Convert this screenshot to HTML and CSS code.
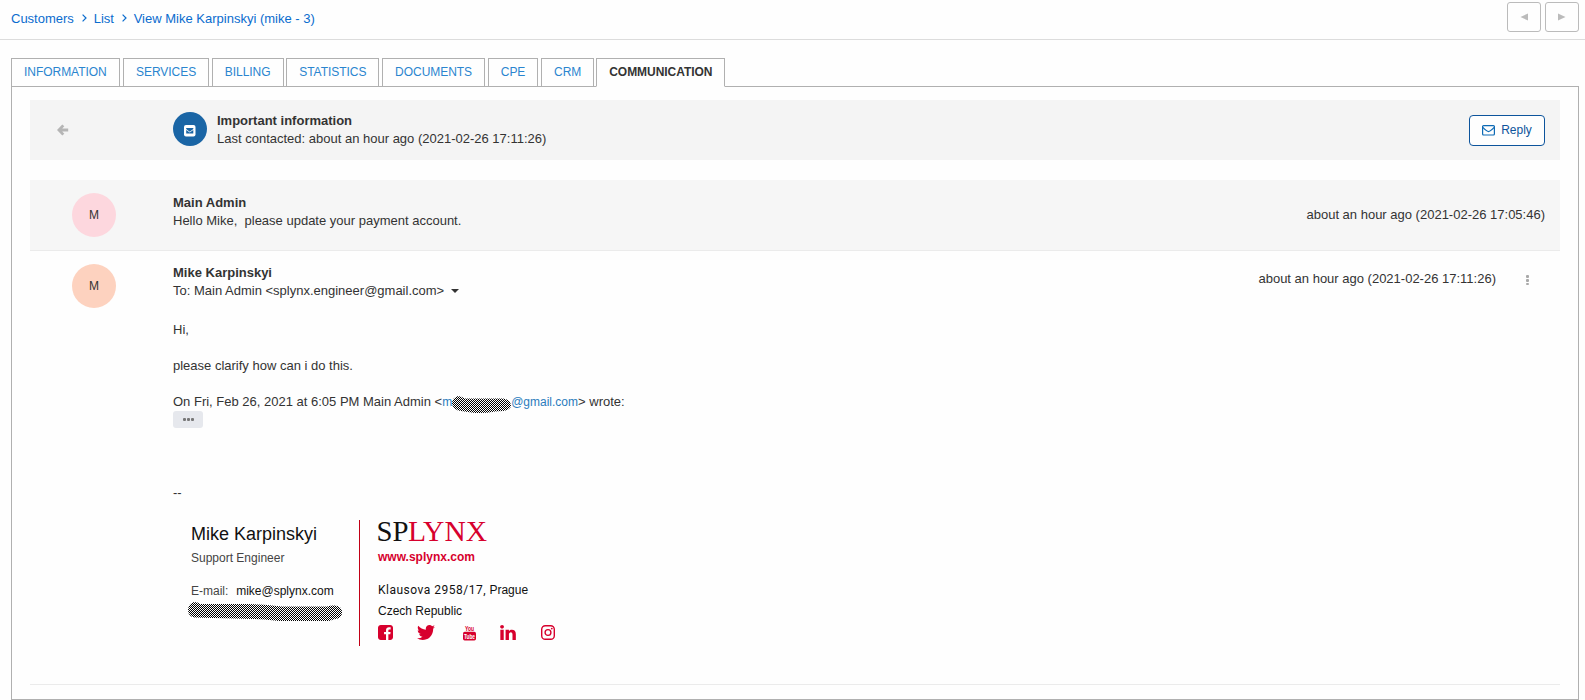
FILE: index.html
```html
<!DOCTYPE html>
<html lang="en">
<head>
<meta charset="utf-8">
<title>View Mike Karpinskyi</title>
<link rel="stylesheet" href="styles.css">
</head>
<body>
<header class="topbar">
  <nav class="crumbs">
    <a>Customers</a>
    <svg class="sep" viewBox="0 0 5 8"><path d="M.6.6 4 4 .6 7.4"/></svg>
    <a>List</a>
    <svg class="sep" viewBox="0 0 5 8"><path d="M.6.6 4 4 .6 7.4"/></svg>
    <a>View Mike Karpinskyi (mike - 3)</a>
  </nav>
  <div class="pager">
    <button class="page-btn"><svg viewBox="0 0 8 8"><path d="M8 .5v7L.5 4z"/></svg></button>
    <button class="page-btn"><svg viewBox="0 0 8 8"><path d="M0 .5v7L7.5 4z"/></svg></button>
  </div>
</header>
<nav class="tabs">
  <a class="tab">INFORMATION</a>
  <a class="tab">SERVICES</a>
  <a class="tab">BILLING</a>
  <a class="tab">STATISTICS</a>
  <a class="tab">DOCUMENTS</a>
  <a class="tab">CPE</a>
  <a class="tab">CRM</a>
  <a class="tab active">COMMUNICATION</a>
</nav>
<main class="panel">
  <section class="subject">
    <div class="back"><svg viewBox="0 0 12 12"><path d="M6.3 1.400 1.900 6l4.400 4.600M2.200 6h9"/></svg></div>
    <div class="badge"><svg viewBox="0 0 12 12"><rect width="11.5" height="11.5" rx="2" fill="#fff"/><path d="M2.2 4.1V3h7.1v1.1L5.75 6.7z M2.2 5.1l3.55 2.5L9.3 5.1v3.5H2.2z" fill="#1a65a5"/></svg></div>
    <div class="lines">
      <b>Important information</b>
      <span>Last contacted: about an hour ago (2021-02-26 17:11:26)</span>
    </div>
    <button class="reply"><svg viewBox="0 0 13 11"><rect x=".6" y=".6" width="11.8" height="9.4" rx="1"/><path d="M.8 2.4Q5 6.6 6.5 6.6T12.2 2.4"/></svg>Reply</button>
  </section>
  <section class="message first">
    <div class="avatar pink">M</div>
    <div class="lines">
      <b>Main Admin</b>
      <span>Hello Mike,&nbsp; please update your payment account.</span>
    </div>
    <time class="when">about an hour ago (2021-02-26 17:05:46)</time>
  </section>
  <section class="message second">
    <div class="avatar peach">M</div>
    <div class="content">
      <div class="lines">
        <b>Mike Karpinskyi</b>
        <span>To: Main Admin &lt;splynx.engineer@gmail.com&gt; <i class="caret"></i></span>
      </div>
      <div class="mail">
        <p>Hi,</p>
        <p>please clarify how can i do this.</p>
        <p>On Fri, Feb 26, 2021 at 6:05 PM Main Admin &lt;<a>m<svg class="hidden-name" viewBox="0 0 60 18"><defs><pattern id="dither" width="2" height="2" patternUnits="userSpaceOnUse"><path d="M0 0h1v1H0zM1 1h1v1H1z" fill="#000"/></pattern></defs><path d="M7 0Q10 0 14 2.500L52 2.500Q60 4 60 9T52 15L44 15.500Q32 18 20 16.500L7 14.500Q1 12 1 7T7 0z" fill="url(#dither)"/></svg>@gmail.com</a>&gt; wrote:</p>
        <button class="more"><i></i><i></i><i></i></button>
      </div>
      <p class="dashes">--</p>
      <div class="signature">
        <div class="person">
          <div class="fullname">Mike Karpinskyi</div>
          <div class="role">Support Engineer</div>
          <div class="email">E-mail: <span>mike@splynx.com</span></div>
          <svg class="hidden-phone" viewBox="0 0 156 20"><path d="M7 0Q11 0 13 2L60 2Q75 2 95 4.500L140 4.500Q144 3 148 3.500Q155 4 155 10.500T148 17L142 19L92 19Q76 17 66 17L7 15.500Q1 14 1 8T7 0z" fill="url(#dither)"/></svg>
        </div>
        <div class="company">
          <svg class="logo" viewBox="0 0 112 24"><text x="-1.500" y="21" textLength="32" lengthAdjust="spacingAndGlyphs">SP</text><text class="accent" x="30" y="21" textLength="79" lengthAdjust="spacingAndGlyphs">LYNX</text></svg>
          <div class="site">www.splynx.com</div>
          <div class="street"><span>Klausova 2958/17,</span> Prague</div>
          <div class="country">Czech Republic</div>
          <div class="social">
            <svg class="fb" viewBox="128 128 1536 1536"><path d="M1376 128q119 0 203.500 84.500t84.500 203.500v960q0 119-84.500 203.500t-203.500 84.500h-188v-595h199l30-232h-229v-148q0-56 23.500-84t91.500-28l122-1v-207q-63-9-178-9-136 0-217.500 80t-81.500 226v171h-200v232h200v595h-532q-119 0-203.500-84.500t-84.500-203.500v-960q0-119 84.500-203.500t203.500-84.500h960z"/></svg>
            <svg class="tw" viewBox="108 256 1576 1280" preserveAspectRatio="none"><path d="M1684 408q-67 98-162 167 1 14 1 42 0 130-38 259.500t-115.500 248.500-184.500 210.500-258 146-323 54.500q-271 0-496-145 35 4 78 4 225 0 401-138-105-2-188-64.500t-114-159.500q33 5 61 5 43 0 85-11-112-23-185.500-111.500t-73.500-205.500v-4q68 38 146 41-66-44-105-115t-39-154q0-88 44-163 121 149 294.500 238.500t371.500 99.500q-8-38-8-74 0-134 94.500-228.500t228.500-94.500q140 0 236 102 109-21 205-78-37 115-142 178 93-10 186-50z"/></svg>
            <svg class="yt" viewBox="0 0 13 16"><text x="2" y="5.800" textLength="9" lengthAdjust="spacingAndGlyphs">You</text><rect y="6.800" width="13" height="8.700" rx="1.700"/><text class="tube" x="1" y="13.800" textLength="11" lengthAdjust="spacingAndGlyphs">Tube</text></svg>
            <svg class="li" viewBox="128 148 1536 1468"><path d="M477 625v991h-330v-991h330zm21-306q1 73-50.500 122t-135.500 49h-2q-82 0-132-49t-50-122q0-74 51.500-122.500t134.500-48.500 133 48.500 51 122.500zm1166 729v568h-329v-530q0-105-40.500-164.500t-126.500-59.500q-63 0-105.500 34.500t-63.500 85.500q-11 30-11 81v553h-329q2-399 2-647t-1-296l-1-48h329v144h-2q20-32 41-56t56.500-52 87-43.500 114.500-15.500q171 0 275 113.500t104 332.500z"/></svg>
            <svg class="ig" viewBox="0 0 14 15"><rect x=".7" y=".7" width="12.600" height="13.600" rx="3.600"/><circle cx="7" cy="7.500" r="2.900"/><circle class="dot" cx="10.800" cy="3.600" r=".9"/></svg>
          </div>
        </div>
      </div>
    </div>
    <time class="when">about an hour ago (2021-02-26 17:11:26)</time>
    <div class="dots"><i></i><i></i><i></i></div>
  </section>
</main>
</body>
</html>
```
FILE: styles.css
```css
* { box-sizing: border-box; }
body {
  margin: 0;
  height: 700px;
  display: flex;
  flex-direction: column;
  background: #fefefe;
  color: #333;
  font: 13px/18px "Liberation Sans", Arial, sans-serif;
}
p { margin: 0; }
svg { display: block; flex: none; }
button { font: inherit; padding: 0; background: #fefefe; }

.topbar {
  height: 40px;
  flex: none;
  display: flex;
  justify-content: space-between;
  border-bottom: 1px solid #dcdcdc;
  padding: 2px 6px 0 11px;
}
.crumbs { display: flex; height: 33px; align-items: center; color: #0a6cce; }
.sep { width: 5px; height: 8px; margin: 0 7px 2px 7.800px; fill: none; stroke: #0a6cce; stroke-width: 1.2; }
.pager { display: flex; gap: 4px; }
.page-btn {
  width: 34px; height: 30px;
  border: 1px solid #bbb; border-radius: 3px;
  display: flex; align-items: center; justify-content: center;
}
.page-btn svg { width: 8px; height: 8px; fill: #bbb; }

.tabs { display: flex; gap: 2.7px; height: 29px; margin: 18px 0 -1px 11px; flex: none; }
.tab {
  border: 1px solid #b0b0b0;
  padding: 0 12px;
  font-size: 12px;
  line-height: 27px;
  letter-spacing: -.04px;
  color: #2a85cf;
  background: #fefefe;
}
.tab:first-child { margin-right: .6px; }
.tab.active { color: #333; font-weight: bold; border-bottom-color: #fefefe; margin-left: -.7px; position: relative; z-index: 1; }

.panel { flex: 1; margin: 0 6px 0 11px; border: 1px solid #b0b0b0; padding: 13px 18px 0; }
.subject {
  height: 60px; background: #f4f4f4;
  display: flex; align-items: flex-start;
  padding-right: 15px; margin-bottom: 20px;
}
.back { width: 143px; padding: 24px 0 0 26.500px; }
.back svg { width: 12px; height: 12px; fill: none; stroke: #b5b5b5; stroke-width: 2.8; }
.badge { width: 34px; height: 34px; margin: 12px 10px 0 0; border-radius: 50%; background: #1a65a5; padding: 13px 0 0 11px; }
.badge svg { width: 12px; height: 12px; }
.lines { display: flex; flex-direction: column; }
.subject .lines { padding-top: 12px; }
.reply {
  width: 76px; height: 31px; margin: 15px 0 0 auto;
  display: flex; align-items: center; justify-content: center; gap: 6px;
  border: 1px solid #0d549c; border-radius: 4px;
  color: #0d549c; font-size: 12px; line-height: 16px;
  padding-bottom: 1px;
}
.reply svg { width: 13px; height: 11px; fill: none; stroke: #0d6ab5; stroke-width: 1.2; }

.message { display: flex; align-items: flex-start; border-bottom: 1px solid #ebebeb; }
.first { height: 71px; background: #f6f6f6; padding-right: 15px; }
.avatar {
  width: 44px; height: 44px; margin: 13px 57px 0 42px;
  border-radius: 50%; text-align: center;
  font-size: 12px; line-height: 44px;
}
.pink { background: #fdd7de; }
.peach { background: #fdd2bf; }
.first .lines { padding-top: 14px; }
.when { margin-left: auto; }
.first .when { margin-top: 26px; }
.second { height: 434px; padding-right: 31px; }
.content { padding-top: 13px; }
.second .when { margin-top: 19px; }
.caret { display: inline-block; margin-left: 3px; vertical-align: 2px; border: 4px solid transparent; border-top-color: #333; border-bottom: 0; }
.dots { display: flex; flex-direction: column; gap: 1.200px; margin: 24px 0 0 30px; }
.dots i { width: 3px; height: 2.700px; background: #a9a9a9; border-radius: 1px; }

.mail { display: flex; flex-direction: column; gap: 18px; padding-top: 21px; }
.mail a { font-size: 12px; color: #2a7cbd; }
.hidden-name { display: inline-block; width: 60px; height: 18px; margin: -6px 0 -5px -1px; vertical-align: -3px; }
.more {
  width: 30px; height: 17px; margin-top: -18px;
  border: 0; border-radius: 3px; background: #e6e8ed;
  display: flex; align-items: center; justify-content: center; gap: 1px;
}
.more i { width: 3px; height: 3px; background: #777; border-radius: 1px; }
.dashes { margin-top: 56px; }
.signature { display: flex; padding: 18px 0 0 18px; }
.person { width: 169px; height: 126px; border-right: 1px solid #c10016; font-size: 12px; color: #444; }
.fullname { font-size: 18px; line-height: 22px; color: #111; padding-top: 3px; }
.role { margin-top: 4px; }
.email { margin-top: 15px; }
.email span { margin-left: 4.500px; color: #111; }
.hidden-phone { width: 156px; height: 20px; margin: 2px 0 0 -4px; }
.company { padding-left: 18px; font-size: 12px; color: #111; }
.logo { width: 112px; height: 24px; overflow: visible; font: 30px "Liberation Serif", serif; fill: #111; }
.accent { fill: #d7002d; }
.site { color: #d7002d; font-weight: bold; margin-top: 4px; }
.street { margin-top: 15px; }
.street span { font-family: Roboto, sans-serif; letter-spacing: .5px; }
.country { margin-top: 3px; }
.social { display: flex; fill: #d7002d; padding-top: 1px; height: 18px; margin-top: 3px; align-items: center; }
.fb { width: 15px; height: 15px; }
.tw { width: 18px; height: 15px; margin-left: 24px; }
.yt { width: 13px; height: 16px; margin-left: 28px; font: bold 7.500px/7px "Liberation Sans", sans-serif; overflow: visible; }
.tube { fill: #fefefe; }
.li { width: 16px; height: 15px; margin-left: 24px; }
.ig { width: 14px; height: 15px; margin-left: 25px; fill: none; stroke: #d7002d; stroke-width: 1.400; }
.dot { fill: #d7002d; stroke: none; }
```
